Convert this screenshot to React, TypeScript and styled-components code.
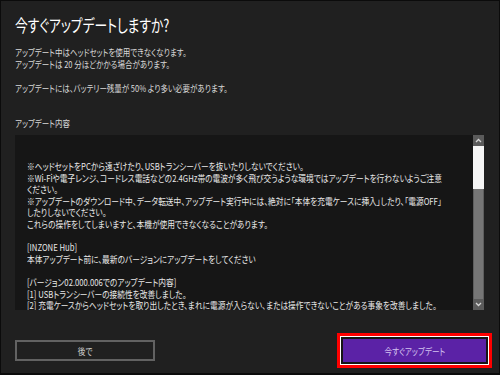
import React from 'react';
import styled, { createGlobalStyle } from 'styled-components';

const GlobalStyle = createGlobalStyle`
  html, body {
    margin: 0;
    padding: 0;
    background: #202020;
  }
  * {
    box-sizing: border-box;
  }
`;

// the reference font has narrow kana, so text is squeezed horizontally
const Dialog = styled.div`
  width: 500px;
  height: 375px;
  display: flex;
  flex-direction: column;
  background: #202020;
  border: 1px solid #0b0b0b;
  border-bottom-width: 2px;
  font-family: 'Noto Sans CJK JP', 'Noto Sans', sans-serif;
  font-feature-settings: 'palt';
  color: #e4e4e4;
  overflow: hidden;
`;

const Header = styled.div`
  padding: 13px 14px 0;
`;

const Title = styled.h1`
  margin: 0;
  font-size: 17px;
  font-weight: 400;
  line-height: 22px;
  color: #ffffff;
  white-space: nowrap;
  transform: scaleX(0.75);
  transform-origin: left center;
`;

const Note = styled.p<{ $gap: number }>`
  margin: ${(p) => p.$gap}px 0 0;
  font-size: 9.5px;
  line-height: 12px;
  color: #d8d8d8;
  white-space: nowrap;
  transform: scaleX(0.79);
  transform-origin: left center;
`;

const Box = styled.div`
  display: flex;
  width: 469px;
  height: 175px;
  margin: 6px 0 0 14px;
  background: #161616;
`;

const BoxText = styled.div`
  flex: 1;
  overflow: hidden;
  padding: 26px 0 0 12px;
  font-size: 9.5px;
  line-height: 11.6px;
  color: #e8e8e8;
`;

const Line = styled.div`
  min-height: 11.6px;
  white-space: pre;
  transform: scaleX(0.81);
  transform-origin: left center;
`;

const Scrollbar = styled.div`
  width: 11px;
  display: flex;
  flex-direction: column;
  background: #6e6e6e;
`;

const ScrollButton = styled.div`
  height: 11px;
  display: flex;
  align-items: center;
  justify-content: center;
  background: #5b5b5b;
`;

const Thumb = styled.div`
  height: 43px;
  background: #f6f6f6;
`;

const Track = styled.div`
  flex: 1;
  border-left: 1px solid #5e5e5e;
  border-right: 1px solid #5e5e5e;
  background: #767676;
`;

const Footer = styled.div`
  display: flex;
  align-items: center;
  justify-content: space-between;
  margin-top: 29px;
  padding: 0 13px 0 14px;
  height: 23px;
`;

const Button = styled.button<{ $primary?: boolean }>`
  display: flex;
  align-items: center;
  justify-content: center;
  padding: 0;
  font-family: inherit;
  font-feature-settings: 'palt';
  font-size: 9.5px;
  width: ${(p) => (p.$primary ? 143 : 140)}px;
  height: ${(p) => (p.$primary ? 23 : 21)}px;
  background: ${(p) => (p.$primary ? '#5b22a6' : 'transparent')};
  color: ${(p) => (p.$primary ? '#d4c2f0' : '#d0d0d0')};
  border: ${(p) => (p.$primary ? 'none' : '2px solid #626262')};
  box-shadow: ${(p) =>
    p.$primary ? '0 0 0 2px #151515, 0 0 0 3px #ffffff, 0 0 0 6px #ff0000' : 'none'};
`;

const ButtonLabel = styled.span`
  display: inline-block;
  white-space: nowrap;
  transform: scaleX(0.8);
`;

const Chevron = ({ down }: { down?: boolean }) => (
  <svg width="7" height="5" viewBox="0 0 7 5">
    <polyline
      points={down ? '1,1 3.5,3.5 6,1' : '1,4 3.5,1.5 6,4'}
      fill="none"
      stroke="#d6d6d6"
      strokeWidth="1.3"
    />
  </svg>
);

const releaseNotes = [
  '※ヘッドセットをPCから遠ざけたり、USBトランシーバーを抜いたりしないでください。',
  '※Wi-Fiや電子レンジ、コードレス電話などの2.4GHz帯の電波が多く飛び交うような環境ではアップデートを行わないようご注意',
  'ください。',
  '※アップデートのダウンロード中、データ転送中、アップデート実行中には、絶対に「本体を充電ケースに挿入」したり、「電源OFF」',
  'したりしないでください。',
  'これらの操作をしてしまいますと、本機が使用できなくなることがあります。',
  '',
  '[INZONE Hub]',
  '本体アップデート前に、最新のバージョンにアップデートをしてください',
  '',
  '[バージョン02.000.006でのアップデート内容]',
  '[1] USBトランシーバーの接続性を改善しました。',
  '[2] 充電ケースからヘッドセットを取り出したとき、まれに電源が入らない、または操作できないことがある事象を改善しました。',
  '[3] その他の動作安定性を改善しました。',
];

export default function App() {
  return (
    <>
      <GlobalStyle />
      <Dialog>
        <Header>
          <Title>今すぐアップデートしますか?</Title>
          <Note $gap={10}>アップデート中はヘッドセットを使用できなくなります。</Note>
          <Note $gap={0}>アップデートは 20 分ほどかかる場合があります。</Note>
          <Note $gap={12}>アップデートには、バッテリー残量が 50% より多い必要があります。</Note>
          <Note $gap={23}>アップデート内容</Note>
        </Header>
        <Box>
          <BoxText>
            {releaseNotes.map((line, i) => (
              <Line key={i}>{line}</Line>
            ))}
          </BoxText>
          <Scrollbar>
            <ScrollButton>
              <Chevron />
            </ScrollButton>
            <Thumb />
            <Track />
            <ScrollButton>
              <Chevron down />
            </ScrollButton>
          </Scrollbar>
        </Box>
        <Footer>
          <Button>
            <ButtonLabel>後で</ButtonLabel>
          </Button>
          <Button $primary>
            <ButtonLabel>今すぐアップデート</ButtonLabel>
          </Button>
        </Footer>
      </Dialog>
    </>
  );
}
